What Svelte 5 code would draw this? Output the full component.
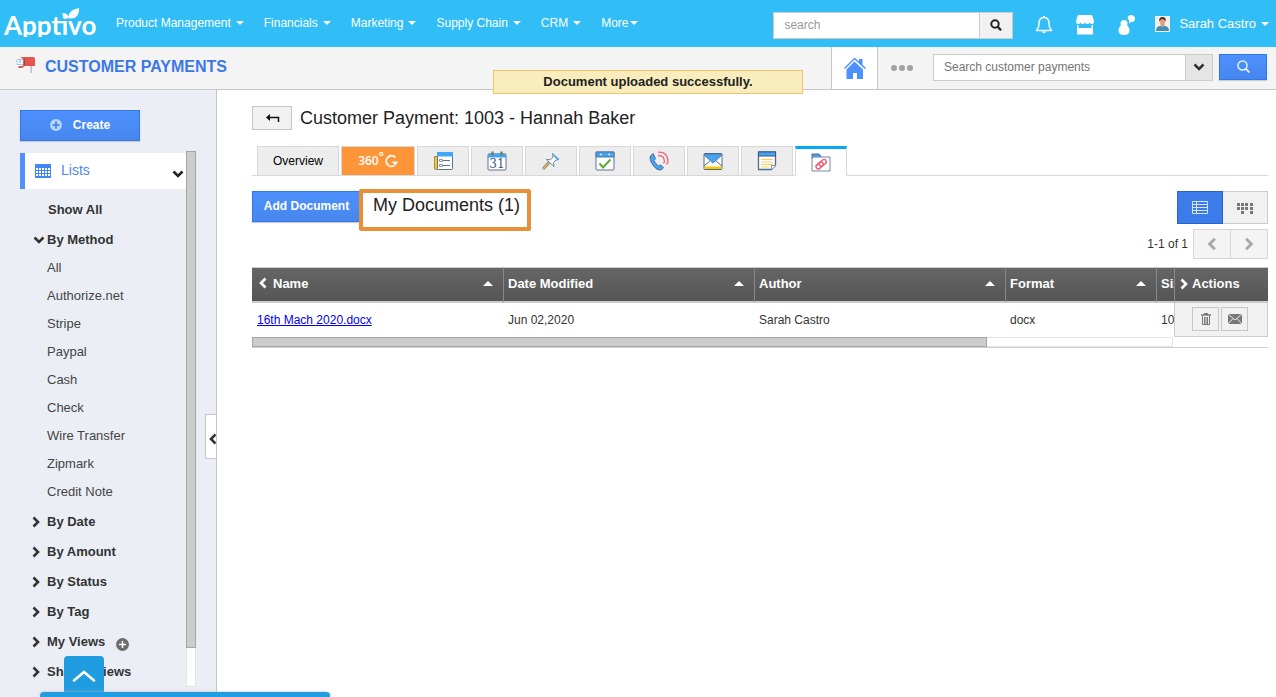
<script>
  const menus = ['Product Management', 'Financials', 'Marketing', 'Supply Chain', 'CRM'];

  const methods = [
    'All',
    'Authorize.net',
    'Stripe',
    'Paypal',
    'Cash',
    'Check',
    'Wire Transfer',
    'Zipmark',
    'Credit Note',
  ];

  const groups = ['By Date', 'By Amount', 'By Status', 'By Tag'];

  const tabs = ['News', 'Calendar', 'Notes', 'Tasks', 'Calls', 'Emails', 'Notepad', 'Documents'];

  const columns = ['Name', 'Date Modified', 'Author', 'Format', 'Size'];

  const documents = [
    {
      name: '16th Mach 2020.docx',
      modified: 'Jun 02,2020',
      author: 'Sarah Castro',
      format: 'docx',
      size: '10 KB',
    },
  ];

  let activeTab = $state('Documents');
  let methodOpen = $state(true);
  let search = $state('');
  let paymentSearch = $state('');
</script>

{#snippet chevron(dir)}
  <svg class="chevron {dir}" viewBox="0 0 12 12" aria-hidden="true">
    <path d="M3.5 1.500 L8 6 L3.5 10.500" fill="none" stroke="currentColor" stroke-width="2.6" />
  </svg>
{/snippet}

{#snippet tabIcon(name)}
  <svg class="tab-icon" viewBox="0 0 20 20" aria-hidden="true">
    {#if name === 'News'}
      <path d="M4.500 5.500h-3V17q0 1.500 1.500 1.500h1.500z" fill="#fdc921" stroke="#a9893f" />
      <rect x="4.500" y="1.500" width="15" height="17" rx="1" fill="#fff" stroke="#5d7396" />
      <path d="M4 1h16v4.500H4z" fill="#42a5f5" />
      <path d="M6.500 8.500h3v2h-3zM6.500 13.500h3v2h-3z" fill="none" stroke="#8493ac" />
      <path d="M10 9.500h7M10 14.500h7" stroke="#5d7396" />
    {:else if name === 'Calendar'}
      <rect x="1" y="3" width="18" height="16" rx="1" fill="#fff" stroke="#5d7396" />
      <path d="M1 2.500h18v4H1z" fill="#42a5f5" />
      <path d="M5.500 .5v4M14.500 .5v4" stroke="#8d7b50" stroke-width="2.500" />
      <text x="10" y="17" text-anchor="middle" class="day">31</text>
    {:else if name === 'Notes'}
      <path d="M8 11.500L2 18" stroke="#6f7480" stroke-width="2.800" />
      <path d="M8 11.500L2 18" stroke="#e6bd35" stroke-width="1.500" />
      <path d="M11.500 2.500l6.500 6-3 .5-2.500 2.500 .5 4L5.500 8.500l4 .2 2.500-2.700z" fill="#fff" stroke="#6b83a8" />
      <path d="M12 2.500l6 6-2.500-.2-3-3.300z" fill="#42a5f5" />
    {:else if name === 'Tasks'}
      <rect x="1" y="1" width="18" height="18" rx="1" fill="#fff" stroke="#5d7396" />
      <path d="M1 1h18v5H1z" fill="#42a5f5" stroke="#5d7396" />
      <path d="M5 3.500h1.500M13.500 3.500H15" stroke="#fff" stroke-width="1.500" />
      <path d="M4.500 12.500l3.500 4 7.500-8" fill="none" stroke="#5daa38" stroke-width="2" />
    {:else if name === 'Calls'}
      <path
        d="M4 2.500L1.500 5Q0 8 3.500 13.500T10.500 19q2.500.5 4-2.500l-3-2.500-2 1Q6 12.500 5 9.500l1.500-2z"
        fill="#42a5f5"
        stroke="#526a8d"
      />
      <path
        d="M9 1.200Q18.500.7 19 10q0 2-1.500 3.500M9 4.500q6.500 0 6.500 6l-1 2"
        fill="none"
        stroke="#ee6677"
        stroke-width="1.300"
      />
    {:else if name === 'Emails'}
      <rect x="1" y="2.500" width="18" height="16" rx="1" fill="#fff" stroke="#526a8d" />
      <path d="M1.500 15.500h17V18h-17z" fill="#ffc400" />
      <path d="M1 15l6-5M19 15l-6-5" stroke="#526a8d" />
      <path d="M1.500 3h17v1.500L10 12 1.500 4.500z" fill="#42a5f5" stroke="#526a8d" stroke-width=".8" />
    {:else if name === 'Notepad'}
      <path d="M1.500 1h17v13.500l-4 4h-13z" fill="#fff" stroke="#526a8d" stroke-width="1.300" />
      <path d="M1.500 1h17v4h-17z" fill="#42a5f5" stroke="#40577b" />
      <path d="M4 8.500h12M4 11h12M4 13.500h12M4 16h8" stroke="#ffd050" />
      <path d="M14.500 18.500v-4h4" fill="#fff" stroke="#8898b0" />
    {:else}
      <path d="M1 4V2h7l2 2.500V7H1z" fill="#42a5f5" stroke="#526a8d" />
      <path d="M1 7q0-2 2-2h16v14H1z" fill="#fff" stroke="#7388aa" />
      <g fill="none" stroke="#ee5a70" stroke-width="1.400" transform="rotate(-40 10 12)">
        <rect x="4" y="10" width="8" height="4.500" rx="2.200" />
        <rect x="8" y="10" width="8" height="4.500" rx="2.200" />
      </g>
    {/if}
  </svg>
{/snippet}

<div class="page">
  <header class="topbar">
    <a class="logo" href="/" aria-label="Apptivo home">
      <span class="logo-name">Apptivo</span>
      <svg class="leaf" viewBox="0 0 22 12" aria-hidden="true">
        <path d="M7 11Q3 11 1 6q6-1 7.500 4Q8 2 20 0q0 12-10 11.500z" fill="#fff" />
      </svg>
    </a>
    <nav class="menus">
      {#each menus as menu}
        <button class="menu">{menu}<i class="caret"></i></button>
      {/each}
      <button class="menu more">More<i class="caret"></i></button>
    </nav>
    <form class="global-search">
      <input type="text" placeholder="search" aria-label="Search" bind:value={search} />
      <button type="button" aria-label="Search">
        <svg width="12" height="12" viewBox="0 0 12 12">
          <circle cx="5" cy="5" r="3.700" fill="none" stroke="#222" stroke-width="2" />
          <path d="M7.500 7.500l3.500 3.800" stroke="#222" stroke-width="2.300" />
        </svg>
      </button>
    </form>
    <div class="shortcuts">
      <button aria-label="Notifications">
        <svg width="18" height="20" viewBox="0 0 18 20">
          <path
            d="M9 2.500c-4 0-5 3-5 6 0 4-1 5-2.500 7h15C15 13.500 14 12.500 14 8.500c0-3-1-6-5-6z"
            fill="none"
            stroke="#fff"
            stroke-width="1.500"
            stroke-linejoin="round"
          />
          <path d="M8 1h2v2H8zM6.500 16.500h5q-2.500 3.500-5 0z" fill="#fff" />
        </svg>
      </button>
      <button aria-label="App store">
        <svg width="20" height="20" viewBox="0 0 20 20" fill="#fff">
          <path d="M3 0h14l2 6q0 3-2 3t-2.300-1.500Q14 9 12.300 9T10 7.500Q9 9 7.500 9T5.300 7.500Q5 9 3 9T1 6z" />
          <path d="M2 10h1.500v3h13v-3H18v9.500H2z" />
        </svg>
      </button>
      <button aria-label="Contacts">
        <svg width="18" height="20" viewBox="0 0 18 20" fill="#fff">
          <circle cx="7" cy="8.500" r="3.500" />
          <path d="M4.500 10h5q3 2 3 5.500Q12.500 20 7 20t-5.500-4.500Q1.500 12 4.500 10z" />
          <path d="M13.500 0Q18 0 18 3.500T14 7l-2 1.500.3-2.500Q8.500 1 13.500 0z" />
        </svg>
      </button>
    </div>
    <button class="user">
      <svg width="15" height="16" viewBox="0 0 15 16" aria-hidden="true">
        <path d="M0 0h15v16H0z" fill="#f3f1ef" />
        <path d="M1 15q0-4.500 4-5h5q4 .5 4 5z" fill="#3f8fb5" />
        <path d="M5.500 7h4v3q-2 2-4 0z" fill="#d99a75" />
        <circle cx="7.500" cy="5" r="2.800" fill="#e0a27c" />
        <path d="M4.300 5.500Q3.500 1 7.500 1t3.200 4.500q-1-2.500-3.200-2.500T4.300 5.500z" fill="#4d2d25" />
      </svg>
      <span>Sarah Castro</span><i class="caret"></i>
    </button>
  </header>

  <div class="appbar">
    <svg class="mailbox" width="20" height="18" viewBox="0 0 20 18" aria-hidden="true">
      <path d="M14.500 9h1.500v8h-1.500z" fill="#b8bcc0" />
      <path d="M4 1h13q2 0 2 2v7H9l-3 2H2l1-2h4V3z" fill="#e2574c" />
      <path d="M5 3h4v6H5z" fill="#b53c36" />
      <path d="M1 3.500h6v5H1z" fill="#f8fbfd" stroke="#a9cbe2" />
      <path d="M4 4v3" stroke="#6aa9d4" />
    </svg>
    <h1>Customer Payments</h1>
    <a class="home" href="/home" aria-label="Home">
      <svg width="22" height="22" viewBox="0 0 22 22" fill="#4d90fe">
        <path d="M15 2h3.500v7L15 5.500z" />
        <path d="M0 11L10.500.5 22 11l-1 1L10.500 2.500 1 12z" />
        <path d="M2.500 12.500l8-8 8.500 8V22h-6v-6H9v6H2.500z" />
      </svg>
    </a>
    <button class="dots" aria-label="More options"><i></i><i></i><i></i></button>
    <form class="app-search">
      <input
        type="text"
        placeholder="Search customer payments"
        aria-label="Search customer payments"
        bind:value={paymentSearch}
      />
      <button type="button" class="options" aria-label="Search options">{@render chevron('down')}</button>
      <button type="button" class="primary go" aria-label="Search payments">
        <svg width="13" height="13" viewBox="0 0 13 13" fill="none" stroke="#e6f0ff">
          <circle cx="5.500" cy="5.500" r="4.500" stroke-width="1.500" />
          <path d="M8.500 8.500l4 4" stroke-width="1.800" />
        </svg>
      </button>
    </form>
    <div class="toast" role="status">Document uploaded successfully.</div>
  </div>

  <div class="body">
    <aside class="sidebar">
      <button class="primary create">
        <svg width="12" height="12" viewBox="0 0 12 12" aria-hidden="true">
          <circle cx="6" cy="6" r="6" fill="#b7d3ff" />
          <path d="M6 2.500v7M2.500 6h7" stroke="#4b8bf5" stroke-width="2" />
        </svg>
        Create
      </button>
      <div class="panel">
        <div class="lists">
          <button class="lists-head">
            <svg width="16" height="14" viewBox="0 0 16 14" aria-hidden="true">
              <path d="M0 0h16v14H0z" fill="#4285f4" />
              <path
                d="M1 5h14M1 8h14M1 11h14"
                stroke="#fff"
                stroke-width="2"
                stroke-dasharray="2 1"
              />
            </svg>
            <span>Lists</span>
            {@render chevron('down')}
          </button>
          <button class="group all">Show All</button>
          <button class="group open" onclick={() => (methodOpen = !methodOpen)}>
            {@render chevron(methodOpen ? 'down' : 'right')}<span>By Method</span>
          </button>
          {#if methodOpen}
            <ul>
              {#each methods as method}
                <li><a href="#{method}">{method}</a></li>
              {/each}
            </ul>
          {/if}
          {#each groups as group}
            <button class="group">{@render chevron('right')}<span>{group}</span></button>
          {/each}
          <button class="group">
            {@render chevron('right')}<span>My Views</span>
            <svg class="add-view" width="13" height="13" viewBox="0 0 13 13" aria-hidden="true">
              <circle cx="6.500" cy="6.500" r="6.500" fill="#6d6d6d" />
              <path d="M6.500 3v7M3 6.500h7" stroke="#fff" stroke-width="1.500" />
            </svg>
          </button>
          <button class="group">{@render chevron('right')}<span>Shared Views</span></button>
        </div>
        <div class="track"><div class="thumb"></div></div>
      </div>
      <button class="collapse" aria-label="Collapse sidebar">{@render chevron('left')}</button>
    </aside>

    <main>
      <div class="title">
        <button class="back" aria-label="Back">
          <svg width="15" height="10" viewBox="0 0 15 10">
            <path d="M4 4.500h9.500V9" fill="none" stroke="#111" stroke-width="1.500" />
            <path d="M5 1v7L1 4.500z" fill="#111" />
          </svg>
        </button>
        <h2>Customer Payment: 1003 - Hannah Baker</h2>
      </div>

      <div class="tabs" role="tablist">
        <button class="tab overview" role="tab" aria-selected="false">Overview</button>
        <button class="tab view360" role="tab" aria-selected="false">
          360<sup>°</sup>
          <svg width="14" height="14" viewBox="0 0 14 14" aria-hidden="true">
            <path d="M11.500 3.500A5.300 5.300 0 1 0 10.500 11.500" fill="none" stroke="#fff" stroke-width="1.800" />
            <path d="M7.500 7.500H14L11.500 11.500z" fill="#fff" />
          </svg>
        </button>
        {#each tabs as tab}
          <button
            class="tab"
            class:active={activeTab === tab}
            role="tab"
            aria-label={tab}
            aria-selected={activeTab === tab}
            onclick={() => (activeTab = tab)}
          >
            {@render tabIcon(tab)}
          </button>
        {/each}
      </div>

      <div class="toolbar">
        <button class="primary add">Add Document</button>
        <h3>My Documents (1)</h3>
        <div class="views">
          <button class="list-view" aria-label="List view">
            <svg width="16" height="13" viewBox="0 0 16 13" fill="none" stroke="#d5e4ff">
              <path d="M.5 .5h15v12H.5zM0 3.500h16M0 6.500h16M0 9.500h16M4.500 0v13" />
            </svg>
          </button>
          <button aria-label="Grid view">
            <svg width="16" height="12" viewBox="0 0 16 12" fill="#777">
              <path
                d="M0 1h3v3H0zM4 1h3v3H4zM8 1h3v3H8zM13 1h3v3h-3zM0 5h3v3H0zM4 5h3v3H4zM8 5h3v3H8zM13 5h3v3h-3zM4 9h3v3H4zM13 9h3v3h-3z"
              />
            </svg>
          </button>
        </div>
      </div>

      <div class="pager">
        <span>1-1 of 1</span>
        <button aria-label="Previous page">{@render chevron('left')}</button>
        <button aria-label="Next page">{@render chevron('right')}</button>
      </div>

      <div class="grid">
        <div class="scroller">
          <table class="documents">
            <thead>
              <tr>
                {#each columns as column, i}
                  <th>
                    <div>
                      {#if i === 0}{@render chevron('left')}{/if}
                      <span>{column}</span><i class="sort"></i>
                    </div>
                  </th>
                {/each}
              </tr>
            </thead>
            <tbody>
              {#each documents as doc}
                <tr>
                  <td><a href="#{doc.name}">{doc.name}</a></td>
                  <td>{doc.modified}</td>
                  <td>{doc.author}</td>
                  <td>{doc.format}</td>
                  <td>{doc.size}</td>
                </tr>
              {/each}
            </tbody>
          </table>
          <div class="hbar"><div class="hthumb"></div></div>
        </div>
        <table class="actions">
          <thead>
            <tr><th><div>{@render chevron('right')}<span>Actions</span></div></th></tr>
          </thead>
          <tbody>
            {#each documents as doc}
              <tr>
                <td>
                  <div>
                    <button aria-label="Delete {doc.name}">
                      <svg width="12" height="12" viewBox="0 0 12 12" fill="none" stroke="#777">
                        <path d="M4 .5h4M1 2h10" stroke-width="1.500" />
                        <path d="M2.500 3v8.500h7V3M4.500 4v7M6 4v7M7.500 4v7" />
                      </svg>
                    </button>
                    <button aria-label="Email {doc.name}">
                      <svg width="14" height="10" viewBox="0 0 14 10">
                        <path d="M0 0h14v10H0z" fill="#777" />
                        <path d="M0 0l7 6 7-6M0 10l5-5.500M14 10L9 4.500" fill="none" stroke="#eee" />
                      </svg>
                    </button>
                  </div>
                </td>
              </tr>
            {/each}
          </tbody>
        </table>
      </div>
    </main>
  </div>

  <div class="dock">
    <button aria-label="Open chat">
      <svg width="24" height="12" viewBox="0 0 24 12">
        <path
          d="M2 10.500L12 2l10 8.500"
          fill="none"
          stroke="#fff"
          stroke-width="2.500"
          stroke-linecap="round"
        />
      </svg>
    </button>
    <div class="dock-bar"></div>
  </div>
</div>

<style>
  :global(body) {
    background: #fff;
  }

  .page,
  .page :global(*) {
    box-sizing: border-box;
  }

  .page {
    display: flex;
    flex-direction: column;
    height: 100vh;
    overflow: hidden;
    color: #333;
    font: 12px/16px 'Liberation Sans', Arial, sans-serif;
  }

  button,
  input {
    margin: 0;
    padding: 0;
    border: 0;
    border-radius: 0;
    background: none;
    color: inherit;
    font: inherit;
  }

  button {
    cursor: pointer;
  }

  h1,
  h2,
  h3,
  ul {
    margin: 0;
    padding: 0;
    font-weight: 400;
    list-style: none;
  }

  svg {
    display: block;
    flex: none;
  }

  .chevron {
    width: 12px;
    height: 12px;
  }

  .chevron.down {
    transform: rotate(90deg);
  }

  .chevron.left {
    transform: rotate(180deg);
  }

  .caret {
    border: 4px solid transparent;
    border-top-color: #fff;
    border-bottom: 0;
  }

  .primary {
    border: 1px solid #3079ed;
    background: linear-gradient(#4d90fe, #4787ed);
    box-shadow: 0 1px 1px #ccc;
    color: #fff;
    font-weight: 700;
  }

  /* top bar */
  .topbar {
    display: flex;
    align-items: center;
    flex: none;
    height: 47px;
    padding: 0 7px 0 4px;
    background: #31bdf6;
    color: #fff;
  }

  .logo {
    position: relative;
    width: 112px;
    height: 29px;
    color: #fff;
    text-decoration: none;
  }

  .logo-name {
    display: block;
    height: 28px;
    overflow: hidden;
    font: 700 26px/33px Lato, sans-serif;
  }

  .leaf {
    position: absolute;
    top: -1px;
    left: 56px;
    width: 22px;
    height: 11px;
  }

  .menus {
    display: flex;
    flex: 1;
    gap: 20px;
    padding-bottom: 1px;
  }

  .menu {
    display: flex;
    align-items: center;
    gap: 5px;
    white-space: nowrap;
  }

  .more {
    gap: 1px;
  }

  .global-search {
    display: flex;
    width: 240px;
    height: 27px;
    margin-top: 3px;
    border: 1px solid #ccc;
  }

  .global-search input {
    flex: 1;
    min-width: 0;
    padding: 0 10px;
    background: #fff;
    color: #333;
  }

  .global-search input::placeholder {
    color: #999;
  }

  .global-search button {
    display: grid;
    place-items: center;
    width: 33px;
    border-left: 1px solid #ccc;
    background: #f1f1f1;
  }

  .shortcuts {
    display: flex;
    gap: 22px;
    margin: 3px 20px 0 22px;
  }

  .user {
    display: flex;
    align-items: center;
    gap: 9px;
    font-size: 13px;
    white-space: nowrap;
  }

  .user .caret {
    margin-left: -4px;
  }

  /* app bar */
  .appbar {
    position: relative;
    display: flex;
    align-items: center;
    flex: none;
    height: 43px;
    padding: 0 9px 0 16px;
    border-bottom: 1px solid #c6c6c6;
    background: #f4f4f4;
  }

  .mailbox {
    margin-bottom: 6px;
  }

  h1 {
    flex: 1;
    margin: 0 0 3px 9px;
    color: #3b78e7;
    font-size: 16px;
    font-weight: 700;
    line-height: 20px;
    text-transform: uppercase;
  }

  .home {
    display: grid;
    place-items: center;
    align-self: stretch;
    width: 47px;
    border: solid #c6c6c6;
    border-width: 0 1px;
    background: #fff;
  }

  .dots {
    display: flex;
    gap: 2px;
    margin: 0 20px 0 13px;
  }

  .dots i {
    width: 6px;
    height: 6px;
    border-radius: 50%;
    background: #a3a3a3;
  }

  .app-search {
    display: flex;
    height: 27px;
    margin-bottom: 2px;
  }

  .app-search input {
    width: 253px;
    padding: 0 10px;
    border: 1px solid #ccc;
    background: #fff;
  }

  .app-search input::placeholder {
    color: #757575;
  }

  .options {
    display: grid;
    place-items: center;
    width: 27px;
    border: 1px solid #ccc;
    border-left: 0;
    background: #e5e5e5;
  }

  .go {
    display: grid;
    place-items: center;
    width: 48px;
    height: 26px;
    margin-left: 6px;
  }

  .toast {
    position: absolute;
    z-index: 2;
    top: 23px;
    left: 493px;
    width: 310px;
    border: 1px solid #f0c36d;
    background: #f9edbe;
    color: #222;
    font-size: 13px;
    font-weight: 700;
    line-height: 22px;
    text-align: center;
  }

  /* sidebar */
  .body {
    display: flex;
    flex: 1;
    min-height: 0;
  }

  .sidebar {
    position: relative;
    display: flex;
    flex-direction: column;
    flex: none;
    width: 217px;
    padding: 20px 20px 10px;
    border-right: 1px solid #c6c6c6;
    background: #ebeff5;
  }

  .create {
    display: flex;
    align-items: center;
    justify-content: center;
    flex: none;
    gap: 11px;
    width: 120px;
    height: 31px;
    padding-bottom: 2px;
  }

  .panel {
    display: flex;
    flex: 1;
    min-height: 0;
    margin-top: 10px;
  }

  .lists {
    width: 166px;
    overflow: hidden;
    padding-top: 2px;
    font-size: 13px;
  }

  .lists-head {
    display: flex;
    align-items: center;
    gap: 10px;
    width: 100%;
    height: 36px;
    margin-bottom: 6px;
    padding: 0 2px 0 10px;
    border-left: 5px solid #4d90fe;
    background: #fff;
    color: #222;
    font-size: 14px;
    text-align: left;
  }

  .lists-head span {
    flex: 1;
    padding-bottom: 2px;
    color: #4d87e8;
  }

  .lists-head .chevron {
    margin-top: 6px;
  }

  .group {
    display: flex;
    align-items: center;
    gap: 5px;
    width: 100%;
    height: 30px;
    padding-left: 10px;
    font-weight: 700;
    white-space: nowrap;
  }

  .all {
    padding-left: 28px;
  }

  .open {
    padding-left: 13px;
    gap: 2px;
  }

  .add-view {
    margin: 4px 0 0 6px;
  }

  .lists ul {
    margin-top: -1px;
    padding-bottom: 1px;
  }

  .lists li {
    height: 28px;
    padding-left: 27px;
    line-height: 28px;
  }

  .lists a {
    color: #444;
    text-decoration: none;
  }

  .track {
    width: 10px;
    border: 1px solid #e4e4e4;
    background: #fff;
  }

  .thumb {
    width: 10px;
    height: 93%;
    margin: -1px;
    border: 1px solid #a6a6a6;
    background: #ccc;
  }

  .collapse {
    position: absolute;
    top: 324px;
    right: 0;
    width: 11px;
    height: 45px;
    overflow: hidden;
    border: 1px solid #c6c6c6;
    border-right: 0;
    background: #fff;
  }

  .collapse .chevron {
    margin: 4px 0 0 1px;
  }

  /* record */
  main {
    flex: 1;
    min-width: 0;
    padding: 16px 8px 0 35px;
  }

  .title {
    display: flex;
    align-items: center;
    gap: 8px;
    color: #222;
  }

  .back {
    display: grid;
    place-items: center;
    width: 40px;
    height: 24px;
    border: 1px solid #c6c6c6;
    background: #f1f1f1;
  }

  h2,
  h3 {
    color: #222;
    font-size: 18px;
    line-height: 24px;
  }

  .tabs {
    display: flex;
    gap: 2px;
    height: 30px;
    margin-top: 16px;
    padding-left: 5px;
    border-bottom: 1px solid #d8d8d8;
  }

  .tab {
    display: grid;
    place-items: center;
    width: 52px;
    height: 30px;
    border: 1px solid #d8d8d8;
    background: #ededed;
  }

  .overview {
    width: 82px;
    color: #000;
  }

  .view360 {
    display: flex;
    align-items: center;
    justify-content: center;
    width: 74px;
    background: #ff9539;
    color: #fff;
    font: 600 12px/16px 'Open Sans', sans-serif;
  }

  .view360 sup {
    margin-bottom: 8px;
    font-size: 12px;
    line-height: 8px;
  }

  .active {
    border-top: 3px solid #03a9f4;
    border-bottom-color: #fff;
    background: #fff;
  }

  .tab-icon {
    width: 20px;
    height: 20px;
  }

  .day {
    fill: #40577b;
    font: 12px 'DejaVu Serif', serif;
  }

  .toolbar {
    display: flex;
    align-items: flex-start;
    margin-top: 13px;
  }

  .add {
    width: 109px;
    height: 31px;
    margin-top: 2px;
    padding-bottom: 2px;
  }

  h3 {
    height: 42px;
    margin: 0 0 0 -2px;
    padding: 0 7px 0 10px;
    border: 4px solid #e69138;
    border-radius: 2px;
    background: #fff;
    white-space: nowrap;
  }

  .views {
    display: flex;
    margin: 2px 0 0 auto;
  }

  .views button {
    display: grid;
    place-items: center;
    width: 45px;
    height: 33px;
    border: 1px solid #ccc;
    border-left: 0;
    background: #f1f1f1;
  }

  .views .list-view {
    width: 46px;
    border: 1px solid #2a62c9;
    background: #3b7bea;
  }

  .pager {
    display: flex;
    align-items: center;
    justify-content: flex-end;
    margin-top: -2px;
  }

  .pager span {
    margin-right: 5px;
  }

  .pager button {
    display: grid;
    place-items: center;
    width: 38px;
    height: 30px;
    border: 1px solid #d6d6d6;
    background: #f4f4f4;
    color: #aaa;
  }

  .pager button + button {
    border-left: 0;
    width: 37px;
  }

  .pager .chevron {
    width: 14px;
    height: 14px;
  }

  /* documents grid */
  .grid {
    display: flex;
    margin-top: 8px;
    border-bottom: 1px solid #d0d0d0;
  }

  .scroller {
    flex: 1;
    min-width: 0;
    overflow: hidden;
  }

  table {
    border-spacing: 0;
    table-layout: fixed;
  }

  .documents {
    width: 1155px;
  }

  .documents th {
    width: 251px;
  }

  .documents th:nth-child(4) {
    width: 151px;
  }

  th {
    height: 36px;
    padding: 0 10px 2px 5px;
    border: solid #ccc;
    border-width: 1px 0 2px;
    background: linear-gradient(#666, #555);
    color: #fff;
    font-size: 13px;
    text-align: left;
  }

  .documents th + th {
    padding-left: 4px;
    border-left: 1px solid #888;
  }

  th div {
    display: flex;
    align-items: center;
    gap: 4px;
  }

  .documents th .chevron {
    margin-bottom: 2px;
  }

  .sort {
    margin-left: auto;
    border: 5px solid transparent;
    border-top: 0;
    border-bottom-color: #fff;
  }

  td {
    height: 34px;
    padding: 0 5px;
  }

  td a {
    color: #0000ee;
  }

  .hbar {
    height: 10px;
    margin-right: 1px;
    border: 1px solid #e4e4e4;
  }

  .hthumb {
    width: 80%;
    height: 10px;
    margin: -1px;
    border: 1px solid #a6a6a6;
    background: #ccc;
  }

  .actions {
    flex: none;
    align-self: flex-start;
    width: 94px;
  }

  .actions th {
    padding-left: 3px;
    border-left: 1px solid #888;
  }

  .actions th div {
    gap: 2px;
  }

  .actions td {
    padding: 0 2px 2px 0;
    border: 1px solid #ccc;
    border-top: 0;
    background: #f1f1f1;
  }

  .actions td div {
    display: flex;
    justify-content: center;
    gap: 2px;
  }

  .actions td button {
    display: grid;
    place-items: center;
    width: 27px;
    height: 24px;
    border: 1px solid #c6c6c6;
  }

  /* chat dock */
  .dock {
    position: fixed;
    bottom: 0;
    left: 40px;
    width: 290px;
  }

  .dock button {
    display: grid;
    place-items: center;
    width: 40px;
    height: 36px;
    margin-left: 24px;
    padding-top: 4px;
    border-radius: 4px 4px 0 0;
    background: #209ce0;
  }

  .dock-bar {
    height: 5px;
    border-radius: 4px 4px 0 0;
    background: #209ce0;
    box-shadow: 0 0 3px #bbb;
  }
</style>
